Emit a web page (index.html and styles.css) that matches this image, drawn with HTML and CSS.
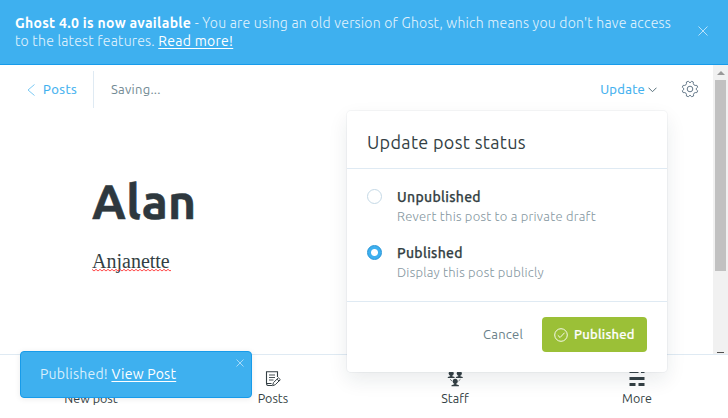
FILE: index.html
```html
<!DOCTYPE html>
<html lang="en">
<head>
<meta charset="utf-8">
<title>Alan</title>
<link rel="stylesheet" href="styles.css">
</head>
<body>
<div class="app">
  <aside class="banner">
    <p class="banner-text"><span class="line"><b>Ghost 4.0 is now available</b><span class="lead"> - You are using an old version of Ghost, which means you don't have access</span></span><span class="line"><span class="rest">to the latest features. </span><a class="read">Read more!</a></span></p>
    <svg class="banner-close" viewBox="0 0 10 10"><path d="M.5.5l9 9M9.500.5l-9 9"/></svg>
  </aside>
  <main class="main">
    <section class="editor">
      <header class="toolbar">
        <a class="back"><svg class="chevron-left" viewBox="0 0 8 12"><path d="M7.500.5L1 6l6.500 5.500"/></svg><span>Posts</span></a>
        <span class="saving">Saving...</span>
        <a class="update"><span>Update</span><svg class="chevron-down" viewBox="0 0 9 6"><path d="M.5.7l4 4 4-4"/></svg></a>
        <svg class="gear" viewBox="0 0 18 18"><circle cx="9" cy="9" r="2.800"/><path d="M7.300 1.300Q9 4.300 10.700 1.300L12.300 2Q11.700 6 15.900 5.400L16.700 7.200Q13.600 9 16.700 10.800L15.900 12.600Q11.900 12 12.600 16L10.700 16.700Q9 13.700 7.300 16.700L5.400 16Q6.100 12 2.100 12.600L1.300 10.800Q4.400 9 1.300 7.200L2.100 5.400Q6.100 6 5.400 2Z"/></svg>
      </header>
      <article class="post">
        <h1>Alan</h1>
        <p class="body">Anjanette<svg class="squiggle" width="79" height="3"><defs><pattern id="z" width="4" height="3" patternUnits="userSpaceOnUse"><path d="M-1 -.5L2 2L5 -.5"/></pattern></defs><rect width="79" height="3" fill="url(#z)" stroke="none"/></svg></p>
      </article>
    </section>
    <div class="scrollbar"><i class="arrow-up"></i><i class="thumb"></i><i class="arrow-down"></i></div>
  </main>
  <nav class="nav">
    <a><svg viewBox="0 0 16 16"></svg><span>New post</span></a>
    <a><svg viewBox="0 0 16 16"><g fill="none" stroke="#343f44"><path d="M12.500 6V.8H1.500v11.300c0 1.500.5 2.400 1.500 2.400H7M1 12.500h5.500" stroke-width="1.100"/><path d="M4 4h6M4 6.500h6M4 9h4.500" stroke-width=".9"/><path d="M7.600 14.700l.8-3 5-4.900 1.900 1.900-5 5zM12 8.100l2 2"/></g></svg><span>Posts</span></a>
    <a><svg viewBox="0 0 16 16"><g fill="#343f44"><circle cx="4.200" cy="2.200" r="2.500"/><circle cx="12.300" cy="2.200" r="2.500"/><path d="M.8 7V6l2.400-.7V4h2v1.300l2.400.7v1zM8.900 7V6l2.400-.7V4h2v1.300l2.400.7v1z"/><circle cx="8.200" cy="10.300" r="2.500"/><path d="M4.500 15.200v-1l2.700-.9V12h2v1.300l2.700.9v1z"/></g><path d="M3 8.200l2 1.800M13.500 8.200l-2 1.800" stroke="#343f44" stroke-width=".7" fill="none"/></svg><span>Staff</span></a>
    <a><svg viewBox="0 0 16 16"><path fill="#343f44" d="M.5 0h9v2h-9zM12 0h3.500v2h-3.500zM.5 6h15v3h-15zM.5 12h6v3h-6zM9.500 12h6v3h-6z"/></svg><span>More</span></a>
  </nav>
  <div class="toast"><p><span class="toast-msg">Published! </span><a>View Post</a></p><svg class="toast-close" viewBox="0 0 8 8"><path d="M.5.5l7 7M7.500.5l-7 7"/></svg></div>
  <section class="dialog">
    <h2><span>Update post status</span></h2>
    <div class="options">
      <div class="option"><i class="radio"></i><div><b>Unpublished</b><small>Revert this post to a private draft</small></div></div>
      <div class="option"><i class="radio on"></i><div><b>Published</b><small>Display this post publicly</small></div></div>
    </div>
    <footer><span class="cancel">Cancel</span><span class="button"><svg viewBox="0 0 14 14"><circle cx="7" cy="7" r="6.300"/><path d="M3.800 7.300l2.300 2.200 4.500-4.800"/></svg><span>Published</span></span></footer>
  </section>
</div>
</body>
</html>
```
FILE: styles.css
```css
* { box-sizing: border-box; }
body { margin: 0; font-family: Ubuntu, "Noto Sans", sans-serif; letter-spacing: .2px; color: #343f44; background: #fff; }
p, h1, h2 { margin: 0; }
svg { display: block; fill: none; flex: none; }
span, b, small { white-space: pre; }
.app { position: relative; width: 728px; height: 418px; display: grid; grid-template-rows: 65px 289px 64px; overflow: hidden; }

.banner { display: flex; justify-content: space-between; padding: 14px 20px 0 15px; background: #3eb0ef; border-bottom: 1px solid #179bea; color: #fff; }
.banner-text { font-size: 14px; line-height: 18px; }
.line { display: block; }
.banner-text b { letter-spacing: .3px; }
.lead, .rest { font-weight: 300; color: #e2f3fd; }
.lead { letter-spacing: .235px; }
.rest { letter-spacing: .23px; }
.read { letter-spacing: .28px; text-decoration: underline; text-underline-offset: 2px; }
.banner-close { width: 10px; height: 10px; margin-top: 12px; stroke: #d8effc; stroke-width: .8; }

.main { display: flex; }
.editor { flex: 1; }
.toolbar { display: flex; align-items: center; height: 49px; padding-right: 14px; font-size: 13px; line-height: 18px; color: #7c8b9a; }
.toolbar span { margin-bottom: 1px; }
.back { display: flex; align-items: center; gap: 8px; width: 94px; height: 37px; padding-left: 27px; border-right: 1px solid #dfeaf3; color: #3eb0ef; letter-spacing: .5px; }
.chevron-left { width: 8px; height: 12px; stroke: #6cc3f3; stroke-width: .9; }
.saving { margin-left: 17px; color: #738a94; letter-spacing: .25px; }
.update { display: flex; align-items: center; gap: 3px; margin-left: auto; color: #3eb0ef; letter-spacing: .3px; }
.back span, .update span { -webkit-text-stroke: .15px #3eb0ef; }
.chevron-down { width: 9px; height: 6px; stroke: #58707c; }
.gear { width: 18px; height: 18px; margin-left: 24px; margin-bottom: 1px; stroke: #65798a; }
.post { padding: 57px 0 0 92px; }
h1 { font-size: 48px; line-height: 60px; font-weight: 700; color: #2e383e; letter-spacing: .4px; -webkit-text-stroke: .6px #2e383e; }
.body { position: relative; margin-top: 13px; font: 20px/34px "Liberation Serif", serif; letter-spacing: 0; }
.squiggle { position: absolute; left: 0; top: 25px; stroke: #f33; stroke-width: .9; }
.scrollbar { display: flex; flex-direction: column; align-items: center; width: 15px; background: #f1f1f1; }
.arrow-up { margin-top: 6px; border: 4px solid transparent; border-top: 0; border-bottom-color: #999; }
.thumb { width: 11px; height: 191px; margin-top: 5px; background: #c1c1c1; }
.arrow-down { width: 7px; height: 1px; margin-top: auto; margin-bottom: 1px; background: #505050; }

.nav { display: grid; grid-template-columns: repeat(4, 1fr); border-top: 1px solid #dfeaf3; font-size: 12.500px; line-height: 18px; letter-spacing: 0; }
.nav a { display: flex; flex-direction: column; align-items: center; padding-top: 16px; }
.nav svg { width: 16px; height: 16px; margin-bottom: 2px; }

.toast { position: absolute; left: 20px; top: 351px; width: 232px; height: 47px; padding: 13px 0 0 19px; border: 1px solid #179bea; border-radius: 4px; background: #3eb0ef; color: #fff; font-size: 14px; line-height: 19px; letter-spacing: .25px; box-shadow: 0 1px 6px rgba(0,0,0,.08); }
.toast-msg { color: #d8effc; }
.toast a { text-decoration: underline; text-underline-offset: 2px; }
.toast-close { position: absolute; right: 7px; top: 7px; width: 8px; height: 8px; stroke: #b2dff9; stroke-width: .9; }

.dialog { position: absolute; left: 347px; top: 111px; width: 320px; height: 261px; border-radius: 4px; background: #fff; box-shadow: 0 0 0 1px rgba(99,114,130,.06), 0 8px 20px rgba(27,39,51,.09); }
h2 { display: flex; align-items: center; height: 58px; padding: 5px 20px 0; border-bottom: 1px solid #dfeaf3; font-size: 18px; line-height: 24px; font-weight: 400; letter-spacing: .33px; }
.options { display: grid; gap: 18px; height: 133px; padding: 18px 20px 0; align-content: start; border-bottom: 1px solid #dfeaf3; }
.option { display: flex; gap: 15px; }
.option b, .option small { display: block; position: relative; top: 1px; font-size: 14px; line-height: 19px; }
.option b { font-weight: 500; letter-spacing: .32px; -webkit-text-stroke: .25px #343f44; }
.option small { font-size: 13px; font-weight: 300; color: #8496a0; letter-spacing: .23px; }
.radio { width: 15px; height: 15px; margin-top: 2px; border: 1px solid #c5d9e6; border-radius: 50%; }
.radio.on { border: 1px solid #2493d6; background: radial-gradient(circle, #fff 3px, #3eb0ef 4px); }
footer { display: flex; align-items: center; justify-content: flex-end; height: 65px; padding-right: 20px; font-size: 13px; line-height: 18px; }
.cancel { margin-right: 19px; padding-bottom: 1px; color: #6a7f89; }
.button { display: flex; align-items: center; gap: 6px; width: 105px; height: 35px; padding-left: 12px; border-radius: 4px; background: #9bc037; color: #fff; font-weight: 500; letter-spacing: .25px; }
.button span { margin-bottom: 1px; -webkit-text-stroke: .2px #fff; }
.button svg { width: 14px; height: 14px; stroke: #fff; stroke-width: .9; }
```
